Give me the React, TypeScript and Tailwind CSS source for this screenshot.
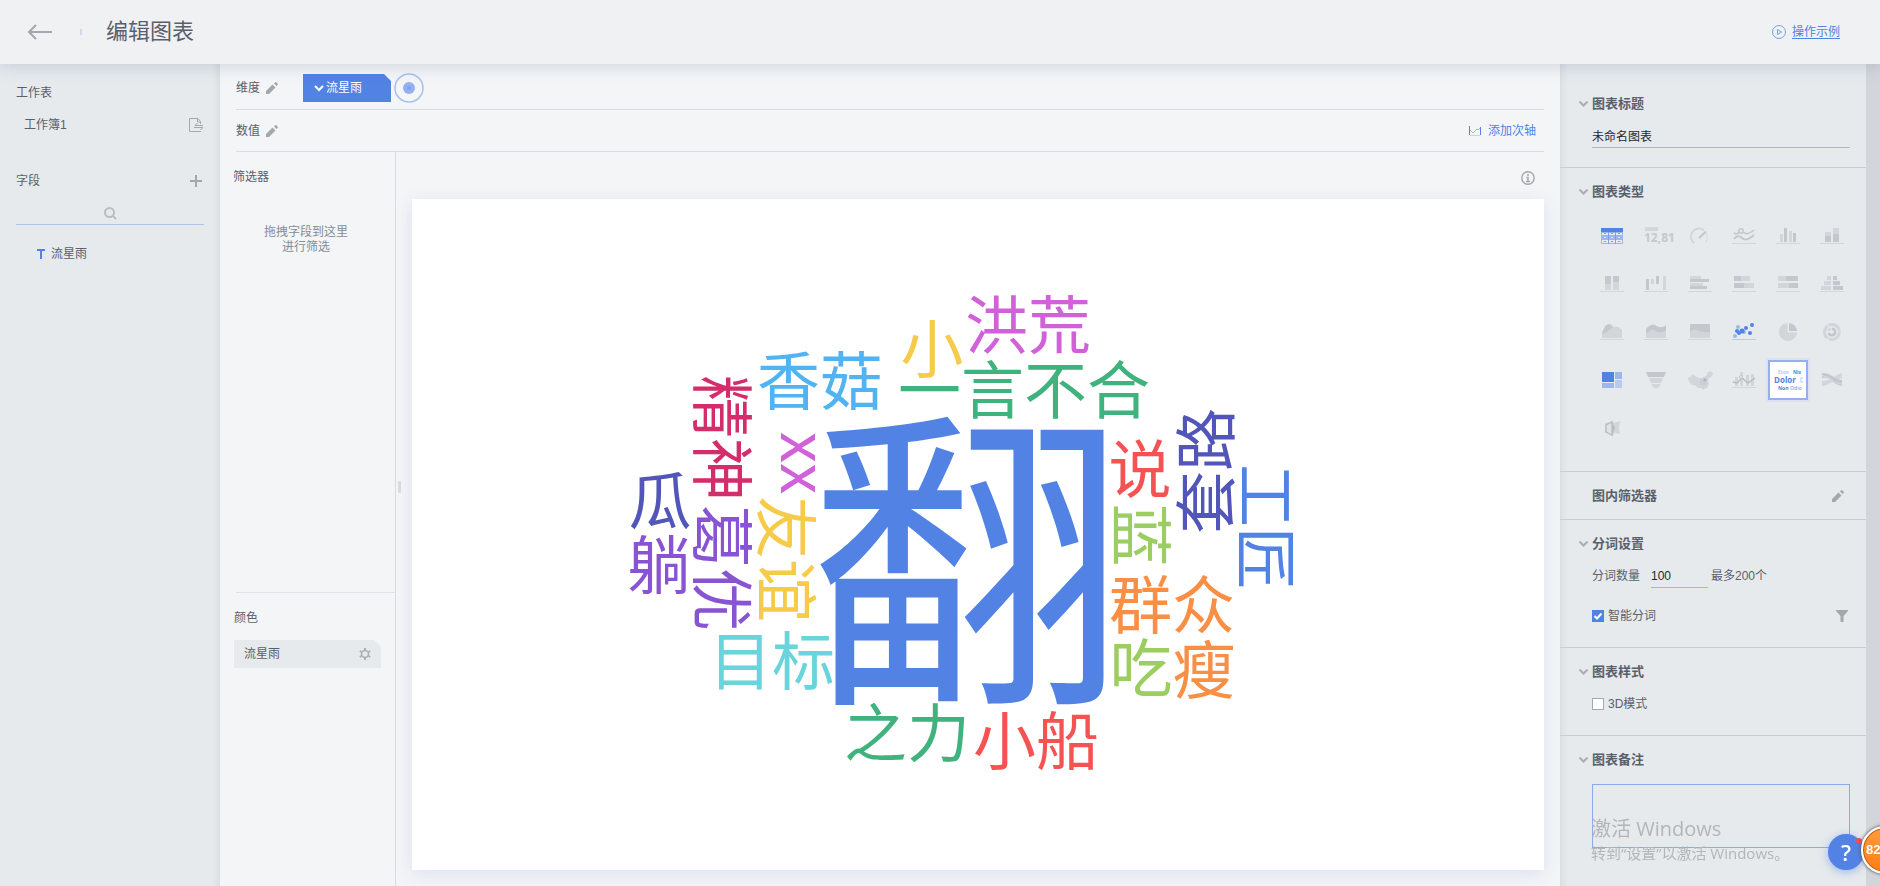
import React, { useState } from 'react';
import clsx from 'clsx';

interface Word {
  text: string;
  x: number;
  y: number;
  color: string;
  size?: number;
  rotate?: number;
}

const WORDS: Word[] = [
  { text: '翻', x: 555, y: 361, color: '#5182e4', size: 316 },
  { text: '洪荒', x: 616, y: 125, color: '#d061d9' },
  { text: '小', x: 520, y: 149, color: '#f7cb4a' },
  { text: '香菇', x: 408, y: 181, color: '#51b4f1' },
  { text: '一言不合', x: 612, y: 190, color: '#40b27d' },
  { text: '精神', x: 311, y: 239, color: '#d42d6b', rotate: 90 },
  { text: 'xx', x: 393, y: 264, color: '#d061d9', rotate: 90 },
  { text: '友谊', x: 375, y: 360, color: '#f7cb4a', rotate: 90 },
  { text: '瓜', x: 248, y: 301, color: '#5156b8' },
  { text: '躺', x: 247, y: 365, color: '#8954d4' },
  { text: '葛优', x: 311, y: 369, color: '#8954d4', rotate: 90 },
  { text: '目标', x: 360, y: 461, color: '#69d4db' },
  { text: '之力', x: 495, y: 533, color: '#40b27d' },
  { text: '小船', x: 624, y: 541, color: '#f55253' },
  { text: '说', x: 728, y: 269, color: '#f55253' },
  { text: '蓝', x: 730, y: 336, color: '#9ccd63', rotate: 90 },
  { text: '套路', x: 793, y: 272, color: '#5156b8', rotate: -90 },
  { text: '工匠', x: 855, y: 328, color: '#5182e4', rotate: 90 },
  { text: '群众', x: 760, y: 405, color: '#f98e45' },
  { text: '吃', x: 729, y: 468, color: '#9ccd63' },
  { text: '瘦', x: 792, y: 470, color: '#f98e45' },
];

const DARK = '#c4c8ce';
const LIGHT = '#d2d6da';
const BLUE = '#5182e4';
const SOFT = '#9db7ea';

const Base = ({ color = LIGHT }: { color?: string }) => <rect x="6" y="19" width="24" height="1" fill={color} />;

const CHART_TYPES: { name: string; icon: React.ReactNode }[] = [
  {
    name: '表格',
    icon: (
      <g shapeRendering="crispEdges">
        <rect x="7" y="4" width="22" height="16" fill={SOFT} />
        <rect x="7" y="4" width="22" height="4" fill={BLUE} />
        <path d="M8 9h6v2H8zM15 9h6v2h-6zM22 9h6v2h-6zM8 16h6v3H8zM15 16h6v3h-6zM22 16h6v3h-6z" fill="#e6eaed" />
        <path d="M14 8h1v12h-1zM21 8h1v12h-1zM10 9h2v1h-2zM17 9h2v1h-2zM24 9h2v1h-2zM10 17h2v1h-2zM17 17h2v1h-2zM24 17h2v1h-2z" fill="#7c9fe8" />
        <path d="M10 13h2v1h-2zM17 13h2v1h-2zM24 13h2v1h-2z" fill="#e6eaed" />
      </g>
    ),
  },
  {
    name: '指标卡',
    icon: (
      <>
        <rect x="7" y="3" width="13" height="4" fill={LIGHT} />
        <text x="6" y="18" fontSize="12" fontWeight="700" fill={DARK} fontFamily="Open Sans">12,81</text>
      </>
    ),
  },
  {
    name: '仪表盘',
    icon: (
      <g fill="none" stroke={DARK}>
        <path d="M12 19A8 8 0 1 1 22 6.300" stroke="#ced2d7" strokeWidth="1.600" />
        <path d="M24 9.500a8 8 0 0 1-.5 9" stroke="#d8dcdf" strokeWidth="1.200" />
        <path d="M17 14l7-6.500" strokeWidth="2" />
      </g>
    ),
  },
  {
    name: '折线图',
    icon: (
      <>
        <g fill="none" stroke={DARK} strokeWidth="1.600">
          <path d="M8 9q3 2 5-1M17 8q4 4 11-2" />
          <circle cx="15" cy="7" r="2.200" />
          <path d="M8 15q4-5 8-1t12-3" stroke={DARK} strokeWidth="2" />
        </g>
        <Base />
      </>
    ),
  },
  {
    name: '柱状图',
    icon: (
      <>
        <path d="M10 10h3v8h-3zM19 7h3v11h-3z" fill={LIGHT} />
        <path d="M14 4h3v14h-3zM23 9h3v9h-3z" fill={DARK} />
        <Base />
      </>
    ),
  },
  {
    name: '堆积柱状图',
    icon: (
      <>
        <path d="M11 8h6v4h-6zM19 4h6v6h-6z" fill={LIGHT} />
        <path d="M11 12h6v6h-6zM19 10h6v8h-6z" fill={DARK} />
        <Base />
      </>
    ),
  },
  {
    name: '百分比堆积柱状图',
    icon: (
      <>
        <path d="M11 4h6v8h-6zM19 4h6v6h-6z" fill={DARK} />
        <path d="M11 12h6v6h-6zM19 10h6v8h-6z" fill={LIGHT} />
        <Base />
      </>
    ),
  },
  {
    name: '瀑布图',
    icon: (
      <>
        <path d="M8 7h3v11H8zM18 4h3v8h-3z" fill={DARK} />
        <path d="M13 7h3v5h-3zM25 4h3v14h-3z" fill={LIGHT} />
        <Base />
      </>
    ),
  },
  {
    name: '条形图',
    icon: (
      <>
        <path d="M8 4h11v3H8zM8 11h13v3H8z" fill={LIGHT} />
        <path d="M8 7h19v3H8zM8 14h17v3H8z" fill={DARK} />
        <Base />
      </>
    ),
  },
  {
    name: '堆积条形图',
    icon: (
      <>
        <path d="M8 4h7v5H8zM8 11h10v5H8z" fill={DARK} />
        <path d="M15 4h9v5h-9zM18 11h10v5H18z" fill={LIGHT} />
        <Base />
      </>
    ),
  },
  {
    name: '百分比堆积条形图',
    icon: (
      <>
        <path d="M8 4h8v5H8zM8 11h11v5H8z" fill={LIGHT} />
        <path d="M16 4h12v5H16zM19 11h9v5h-9z" fill={DARK} />
        <Base />
      </>
    ),
  },
  {
    name: '对比条形图',
    icon: (
      <>
        <path d="M13 4h4v4h-4zM10 9h7v4h-7zM7 14h10v4H7z" fill={LIGHT} />
        <path d="M19 4h4v4h-4zM19 9h7v4h-7zM19 14h10v4H19z" fill={DARK} />
        <Base />
      </>
    ),
  },
  {
    name: '面积图',
    icon: (
      <>
        <path d="M8 18v-5q3-9 7-9 3 0 6 6v8z" fill={DARK} />
        <path d="M8 18v-4l5-2q5-5 8-5.500 3-.5 7 3V18z" fill={LIGHT} />
        <Base />
      </>
    ),
  },
  {
    name: '堆积面积图',
    icon: (
      <>
        <path d="M8 14V9q5-6 9-4 4 3 7 2 2 0 4-2v9z" fill={DARK} />
        <path d="M8 18v-4q5-6 8-4 4 3 7 2l5-1v7z" fill={LIGHT} />
        <Base />
      </>
    ),
  },
  {
    name: '百分比堆积面积图',
    icon: (
      <>
        <path d="M8 4h20v14H8z" fill={DARK} />
        <path d="M8 18v-6q4-4 9-1 5 2 11 1v6z" fill={LIGHT} />
        <Base />
      </>
    ),
  },
  {
    name: '散点图',
    icon: (
      <>
        <g fill={SOFT}>
          <circle cx="12" cy="7" r="2" />
          <circle cx="9" cy="16" r="2" />
          <circle cx="18" cy="12" r="2" />
        </g>
        <g fill={BLUE}>
          <circle cx="26" cy="5" r="2" />
          <circle cx="20" cy="8" r="2" />
          <circle cx="11" cy="11" r="2" />
          <circle cx="13" cy="13" r="2" />
          <circle cx="16" cy="11" r="2.500" />
          <circle cx="24" cy="13" r="2" />
        </g>
        <Base color="#b9cbec" />
      </>
    ),
  },
  {
    name: '饼图',
    icon: (
      <>
        <path d="M17.500 3a9 9 0 1 0 9.500 9.500h-9.500z" fill={LIGHT} />
        <path d="M19 3a8.500 8.500 0 0 1 8 8h-8z" fill={DARK} />
      </>
    ),
  },
  {
    name: '多层饼图',
    icon: (
      <g fill="none">
        <circle cx="18" cy="12" r="7.500" stroke={LIGHT} strokeWidth="3" strokeDasharray="14.700 1" />
        <path d="M18 8.800a3.200 3.200 0 1 1-3.200 4" stroke={DARK} strokeWidth="2.600" />
        <path d="M14.500 11a4 4 0 0 1 2.500-2.500" stroke={LIGHT} strokeWidth="2.600" />
      </g>
    ),
  },
  {
    name: '矩形树图',
    icon: (
      <>
        <rect x="8" y="4" width="12" height="10" fill={BLUE} />
        <path d="M21 4h7v7h-7zM8 15h12v5H8z" fill={SOFT} />
        <rect x="21" y="12" width="7" height="8" fill="#b9cbec" />
      </>
    ),
  },
  {
    name: '漏斗图',
    icon: (
      <>
        <path d="M8 4h20l-2 5H10z" fill={DARK} />
        <path d="M11 10h14l-2 5H13z" fill={LIGHT} />
        <path d="M13 16h10l-3 4q-2 1-4 0z" fill={LIGHT} />
      </>
    ),
  },
  {
    name: '地图',
    icon: (
      <>
        <path d="M6 10l3-2 1-2 3 2 4 2 4 0 4-3 0-2 3-2 2 1 1 2-2 3-2 1-1 2 1 4-2 4-3 1-1 1-2-2-3 0-3-3-3 0-3-3z" fill={LIGHT} />
        <path d="M18 11l4-2 3 2 0 5-3 2-4-2z" fill="#cbcfd4" />
        <circle cx="23" cy="12" r="1.600" fill="#b1b6bd" />
      </>
    ),
  },
  {
    name: '组合图',
    icon: (
      <>
        <path d="M9 9h3v9H9zM14 4h3v14h-3zM20 7h3v11h-3zM25 6h3v12h-3z" fill={LIGHT} />
        <path d="M7 14l4 1 5-5 6 5 7-5" stroke="#b9bdc3" strokeWidth="1.500" fill="none" />
        <circle cx="15" cy="9" r="1.500" fill="#e6eaed" stroke={DARK} />
        <Base />
      </>
    ),
  },
  {
    name: '词云',
    icon: (
      <g fontFamily="Open Sans" fontWeight="700">
        <text x="8" y="6" fontSize="5" fill="#b9cbec">Etoe</text>
        <text x="23" y="6" fontSize="5" fill={BLUE}>Nis</text>
        <text x="4" y="15" fontSize="8" fill={BLUE}>Dolor</text>
        <path d="M30 10h3M30 12h2M30 14h3" stroke="#b9cbec" />
        <text x="8" y="22" fontSize="5" fill={BLUE}>Non</text>
        <text x="20" y="22" fontSize="5" fill={SOFT}>Odio</text>
      </g>
    ),
  },
  {
    name: '桑基图',
    icon: (
      <>
        <path d="M8 13q6 0 10-3t10-5v5q-6 1-10 4t-10 4z" fill={LIGHT} />
        <path d="M8 5q6 0 10 3t10 4v6q-6-1-10-5T8 10z" fill={DARK} />
        <path d="M8 7.500q6 1 10 4.500t10 4" stroke="#e6eaed" strokeWidth=".6" fill="none" />
      </>
    ),
  },
  {
    name: '自定义图',
    icon: (
      <>
        <path d="M18 4l2 3 6-2-1 7 1 6-6-1-2 4-2-4-5 0V7l5-1z" fill={LIGHT} />
        <path d="M18 6v13l-6-3V9z" fill="#dfe3e6" stroke="#b9bdc3" strokeWidth="1.300" />
        <path d="M18 5l3 7-3 8z" fill="#b9bdc3" />
      </>
    ),
  },
];

const ENABLED = ['表格', '散点图', '矩形树图', '词云'];

const Pencil = () => (
  <svg width="12" height="12" viewBox="0 0 12 12" fill="#a2a8ae">
    <path d="M0 12V9L6.500 2.500 9.500 5.500 3 12zM8 1.500L9.500 0q2 0 2.500 2.500L10.500 4z" />
  </svg>
);

const SectionTitle: React.FC<{ title: string; collapsible?: boolean; children?: React.ReactNode }> = ({
  title,
  collapsible = true,
  children,
}) => (
  <div className="-ml-[13px] flex h-[26px] items-center">
    <span className="w-[13px]">
      {collapsible && (
        <svg width="9" height="6" viewBox="0 0 9 6" fill="none" stroke="#a9afb4" strokeWidth="2">
          <path d="M.5 .5l4 4 4-4" />
        </svg>
      )}
    </span>
    <h2 className="flex-1 text-[13px] font-bold">{title}</h2>
    {children}
  </div>
);

const WordCloud = () => (
  <svg viewBox="0 0 1132 671" className="h-full w-full" fontFamily="'Noto Sans CJK SC', sans-serif" textAnchor="middle">
    {WORDS.map(({ text, x, y, color, size = 63, rotate = 0 }) => (
      <text
        key={text}
        y={Math.round(size * 0.38)}
        fontSize={size}
        fill={color}
        transform={`translate(${x} ${y}) rotate(${rotate})`}
      >
        {text}
      </text>
    ))}
  </svg>
);

const FieldPanel = () => (
  <aside className="w-[220px] shrink-0 bg-[#e6eaed] px-4 pt-[17px] shadow-[inset_-10px_0_10px_-10px_rgba(60,70,80,0.14)]">
    <h2 className="leading-6">工作表</h2>
    <div className="mt-2 flex h-6 items-center justify-between pl-2">
      <span>工作簿1</span>
      <button aria-label="切换工作表" className="pr-px">
        <svg width="14" height="14" viewBox="0 0 14 14" fill="none" stroke="#a2a8ae">
          <path d="M12 13.500H.5V.5H9l2.500 3V6M8.500 1v3h3M14 7.500H6L8.500 5M5 9.500h9L11.500 12" />
        </svg>
      </button>
    </div>
    <div className="mt-8 flex h-6 items-center justify-between">
      <h2>字段</h2>
      <button aria-label="添加字段" className="pr-[2px]">
        <svg width="12" height="12" viewBox="0 0 12 12" stroke="#a2a8ae" strokeWidth="2">
          <path d="M6 0v12M0 6h12" />
        </svg>
      </button>
    </div>
    <label className="relative mt-[7px] block">
      <input aria-label="搜索字段" className="block h-[25px] w-full border-b border-[#afc2e8] outline-none" />
      <svg
        width="13"
        height="13"
        viewBox="0 0 13 13"
        fill="none"
        stroke="#b9bec2"
        strokeWidth="2"
        className="absolute top-[7px] left-1/2 -ml-[6px]"
      >
        <circle cx="5.500" cy="5.500" r="4.500" />
        <path d="M9 9l3 3" />
      </svg>
    </label>
    <div className="mt-[17px] flex h-6 items-center gap-[6px] pl-[21px]">
      <svg width="8" height="10" viewBox="0 0 8 10" fill="#5182e4">
        <path d="M0 0h8v2H5v8H3V2H0z" />
      </svg>
      <span>流星雨</span>
    </div>
  </aside>
);

const SettingsPanel = () => {
  const [selected, setSelected] = useState('词云');
  const [count, setCount] = useState('100');
  const [smart, setSmart] = useState(true);
  const [is3d, setIs3d] = useState(false);

  return (
    <aside className="flex w-[320px] shrink-0">
      <div className="flex-1 bg-[#e6eaed] shadow-[inset_10px_0_10px_-10px_rgba(60,70,80,0.14)]">
        <section className="border-b border-[#c9ced1] pt-[27px] pr-4 pb-[19px] pl-8">
          <SectionTitle title="图表标题" />
          <input
            aria-label="图表标题"
            defaultValue="未命名图表"
            className="mt-[7px] block h-6 w-full border-b border-[#9db7ea] text-[#222831] outline-none"
          />
        </section>

        <section className="border-b border-[#c9ced1] pt-[11px] pb-[23px] pl-8">
          <SectionTitle title="图表类型" />
          <div className="mt-[11px] -ml-[2px] grid grid-cols-[repeat(6,44px)] gap-y-2">
            {CHART_TYPES.map(({ name, icon }) => (
              <button
                key={name}
                aria-label={name}
                disabled={!ENABLED.includes(name)}
                onClick={() => setSelected(name)}
                className={clsx(
                  'mx-[2px] flex h-10 items-center justify-center',
                  selected === name && 'border-2 border-[#94b0ef] bg-white ring-2 ring-[#dce2ef]'
                )}
              >
                <svg width="36" height="24" viewBox="0 0 36 24" className="shrink-0">{icon}</svg>
              </button>
            ))}
          </div>
        </section>

        <section className="border-b border-[#c9ced1] pt-[11px] pr-[22px] pb-[10px] pl-8">
          <SectionTitle title="图内筛选器" collapsible={false}>
            <button aria-label="编辑筛选器"><Pencil /></button>
          </SectionTitle>
        </section>

        <section className="border-b border-[#c9ced1] pt-[11px] pr-[18px] pb-[19px] pl-8">
          <SectionTitle title="分词设置" />
          <div className="mt-[7px] flex h-6 items-center">
            <label htmlFor="count" className="mr-[11px]">分词数量</label>
            <input
              id="count"
              value={count}
              onChange={e => setCount(e.target.value)}
              className="mr-[3px] h-6 w-[57px] border-b border-[#9db7ea] text-[#222831] outline-none"
            />
            <span>最多200个</span>
          </div>
          <div className="mt-4 flex h-6 items-center justify-between">
            <label className="flex items-center gap-1">
              <span className="relative flex">
                <input
                  type="checkbox"
                  checked={smart}
                  onChange={e => setSmart(e.target.checked)}
                  className="peer h-3 w-3 appearance-none border border-[#a2a8ae] bg-white checked:border-[#5182e4] checked:bg-[#5182e4]"
                />
                <svg viewBox="0 0 12 12" fill="none" stroke="white" strokeWidth="2" className="pointer-events-none absolute inset-0 hidden peer-checked:block">
                  <path d="M2.500 6L5 8.500 9.500 3.500" />
                </svg>
              </span>
              智能分词
            </label>
            <button aria-label="筛选">
              <svg width="12" height="12" viewBox="0 0 12 12" fill="#a2a8ae">
                <path d="M0 0h12v1L7.500 6v6h-3V6L0 1z" />
              </svg>
            </button>
          </div>
        </section>

        <section className="border-b border-[#c9ced1] pt-[11px] pb-[19px] pl-8">
          <SectionTitle title="图表样式" />
          <label className="mt-[7px] flex h-6 items-center gap-1">
            <input
              type="checkbox"
              checked={is3d}
              onChange={e => setIs3d(e.target.checked)}
              className="h-3 w-3 appearance-none border border-[#a2a8ae] bg-white checked:bg-[#5182e4]"
            />
            3D模式
          </label>
        </section>

        <section className="pt-[11px] pr-4 pl-8">
          <SectionTitle title="图表备注" />
          <textarea aria-label="图表备注" className="mt-[11px] block h-16 w-full resize-none border border-[#8aabea] outline-none" />
        </section>
      </div>
      <div className="w-[14px] bg-[#d2d5da]" />
    </aside>
  );
};

export default function App() {
  return (
    <div className="flex min-h-screen flex-col overflow-hidden bg-[#f3f5f7] font-['Liberation_Sans','Noto_Sans_CJK_SC',sans-serif] text-xs text-[#5a606b]">
      <header className="relative z-10 flex h-16 shrink-0 items-center bg-[#f0f1f3] pr-10 pl-7 shadow-[0_2px_16px_rgba(60,80,120,0.2)]">
        <button aria-label="返回">
          <svg width="24" height="16" viewBox="0 0 24 16" fill="none" stroke="#a2a8ae" strokeWidth="2">
            <path d="M24 8H1M8 1L1 8l7 7" />
          </svg>
        </button>
        <span className="ml-7 h-[6px] w-[2px] bg-[#cddaf5]" />
        <h1 className="ml-6 flex-1 text-[22px]">编辑图表</h1>
        <a href="#demo" className="flex items-center gap-[6px] text-[#5182e4]">
          <svg width="14" height="14" viewBox="0 0 14 14" fill="none" stroke="#7c9fe8">
            <circle cx="7" cy="7" r="6.500" />
            <path d="M5.500 4.500v5L9.500 7z" />
          </svg>
          <span className="underline underline-offset-2">操作示例</span>
        </a>
      </header>

      <div className="flex flex-1">
        <FieldPanel />

        <main className="flex min-w-0 flex-1 flex-col">
          <div className="mr-4 ml-4 flex h-[46px] items-center border-b border-[#d9dcdf] pt-[3px]">
            <span className="mr-[6px]">维度</span>
            <button aria-label="编辑维度"><Pencil /></button>
            <button className="ml-[25px] flex h-7 w-[88px] items-center gap-[2px] bg-[#5182e4] pl-[11px] text-white [clip-path:polygon(0_0,81px_0,100%_7px,100%_100%,0_100%)]">
              <svg width="10" height="7" viewBox="0 0 10 7" fill="none" stroke="white" strokeWidth="2">
                <path d="M1 1l4 4 4-4" />
              </svg>
              流星雨
            </button>
            <svg width="30" height="30" viewBox="0 0 30 30" className="ml-[3px]">
              <circle cx="15" cy="15" r="14" fill="none" stroke="#a9c0ef" strokeWidth="1.500" />
              <circle cx="15" cy="15" r="6" fill="#94b0ef" />
              <circle cx="15" cy="15" r="2" fill="#7fa2ee" />
            </svg>
          </div>
          <div className="mr-4 ml-4 flex h-[42px] items-center border-b border-[#d9dcdf]">
            <span className="mr-[6px]">数值</span>
            <button aria-label="编辑数值"><Pencil /></button>
            <button className="mr-2 ml-auto flex items-center gap-[7px] text-[#5182e4]">
              <svg width="12" height="10" viewBox="0 0 12 10" fill="none" stroke="#5182e4">
                <path d="M.5 0v9M11.500 1v8" />
                <path d="M1 9.500h10" stroke="#c5d3ee" />
                <path d="M1 4l3 3 4-4 1 1 2-2" stroke="#9db7ea" />
              </svg>
              添加次轴
            </button>
          </div>

          <div className="flex flex-1">
            <div className="flex w-[176px] shrink-0 flex-col border-r border-[#d9dcdf]">
              <div className="flex-1 pt-[13px] pl-[13px]">
                <h2 className="leading-6">筛选器</h2>
                <p className="mt-9 mr-4 text-center leading-[15px] text-[#868c94]">
                  拖拽字段到这里
                  <br />
                  进行筛选
                </p>
              </div>
              <div className="ml-4 border-t border-[#e0e3e6]" />
              <div className="h-[293px] pt-[13px] pr-[14px] pl-[14px]">
                <h2 className="leading-6">颜色</h2>
                <div className="mt-[10px] flex h-7 items-center justify-between bg-[#e6eaed] pr-[10px] pl-[10px] [clip-path:polygon(0_0,calc(100%-7px)_0,100%_7px,100%_100%,0_100%)]">
                  <span>流星雨</span>
                  <button aria-label="设置颜色">
                    <svg width="12" height="12" viewBox="0 0 12 12" fill="none" stroke="#a9afb4">
                      <circle cx="6" cy="6" r="3.500" strokeWidth="1.500" />
                      <path d="M6 0v2M6 10v2M.8 3l1.700 1M9.500 8l1.700 1M.8 9l1.700-1M9.500 4l1.700-1" strokeWidth="2" />
                    </svg>
                  </button>
                </div>
              </div>
            </div>

            <div className="relative flex min-w-0 flex-1 flex-col pr-4 pb-4 pl-4">
              <div className="absolute top-[329px] left-[2px] h-3 w-[3px] rounded-[1px] bg-[#d9dcdf]" />
              <div className="flex h-[47px] items-center justify-end pt-[5px] pr-[9px]">
                <svg width="14" height="14" viewBox="0 0 14 14" fill="none" stroke="#a2a8ae">
                  <circle cx="7" cy="7" r="6.200" strokeWidth="1.400" />
                  <path d="M7 3v2M5.500 6.500H7V10M5 10.500h4" strokeWidth="1.500" />
                </svg>
              </div>
              <div className="relative min-h-[400px] flex-1 bg-white shadow-[0_4px_16px_rgba(100,130,200,0.16)]">
                <div className="absolute inset-0"><WordCloud /></div>
              </div>
            </div>
          </div>
        </main>

        <SettingsPanel />
      </div>

      {/* overlays */}
      <div className="pointer-events-none fixed right-[9px] bottom-[21px] w-[280px] text-[#b3b6b9] font-['Open_Sans','Noto_Sans_CJK_SC',sans-serif]">
        <p className="text-[20px] leading-6">激活 Windows</p>
        <p className="text-[15px] leading-6">转到“设置”以激活 Windows。</p>
      </div>
      <button
        aria-label="帮助"
        className="fixed right-4 bottom-4 h-9 w-9 rounded-full bg-[#5182e4] text-[22px] leading-9 font-semibold text-white shadow-[0_2px_8px_rgba(81,130,228,0.5)] font-['Open_Sans']"
      >
        ?
        <span className="absolute top-1 right-[2px] h-[6px] w-[6px] rounded-full bg-[#f0504f]" />
      </button>
      <div className="fixed -right-[29px] bottom-3 z-20 h-12 w-12 rounded-full border-2 border-white bg-linear-to-b from-[#ff9c3a] to-[#ff7d12] pl-[3px] text-[13px] leading-[44px] font-bold text-white shadow-[0_0_3px_1px_rgba(90,90,90,0.8),inset_0_0_0_1px_#c05a10]">
        82
      </div>
    </div>
  );
}
